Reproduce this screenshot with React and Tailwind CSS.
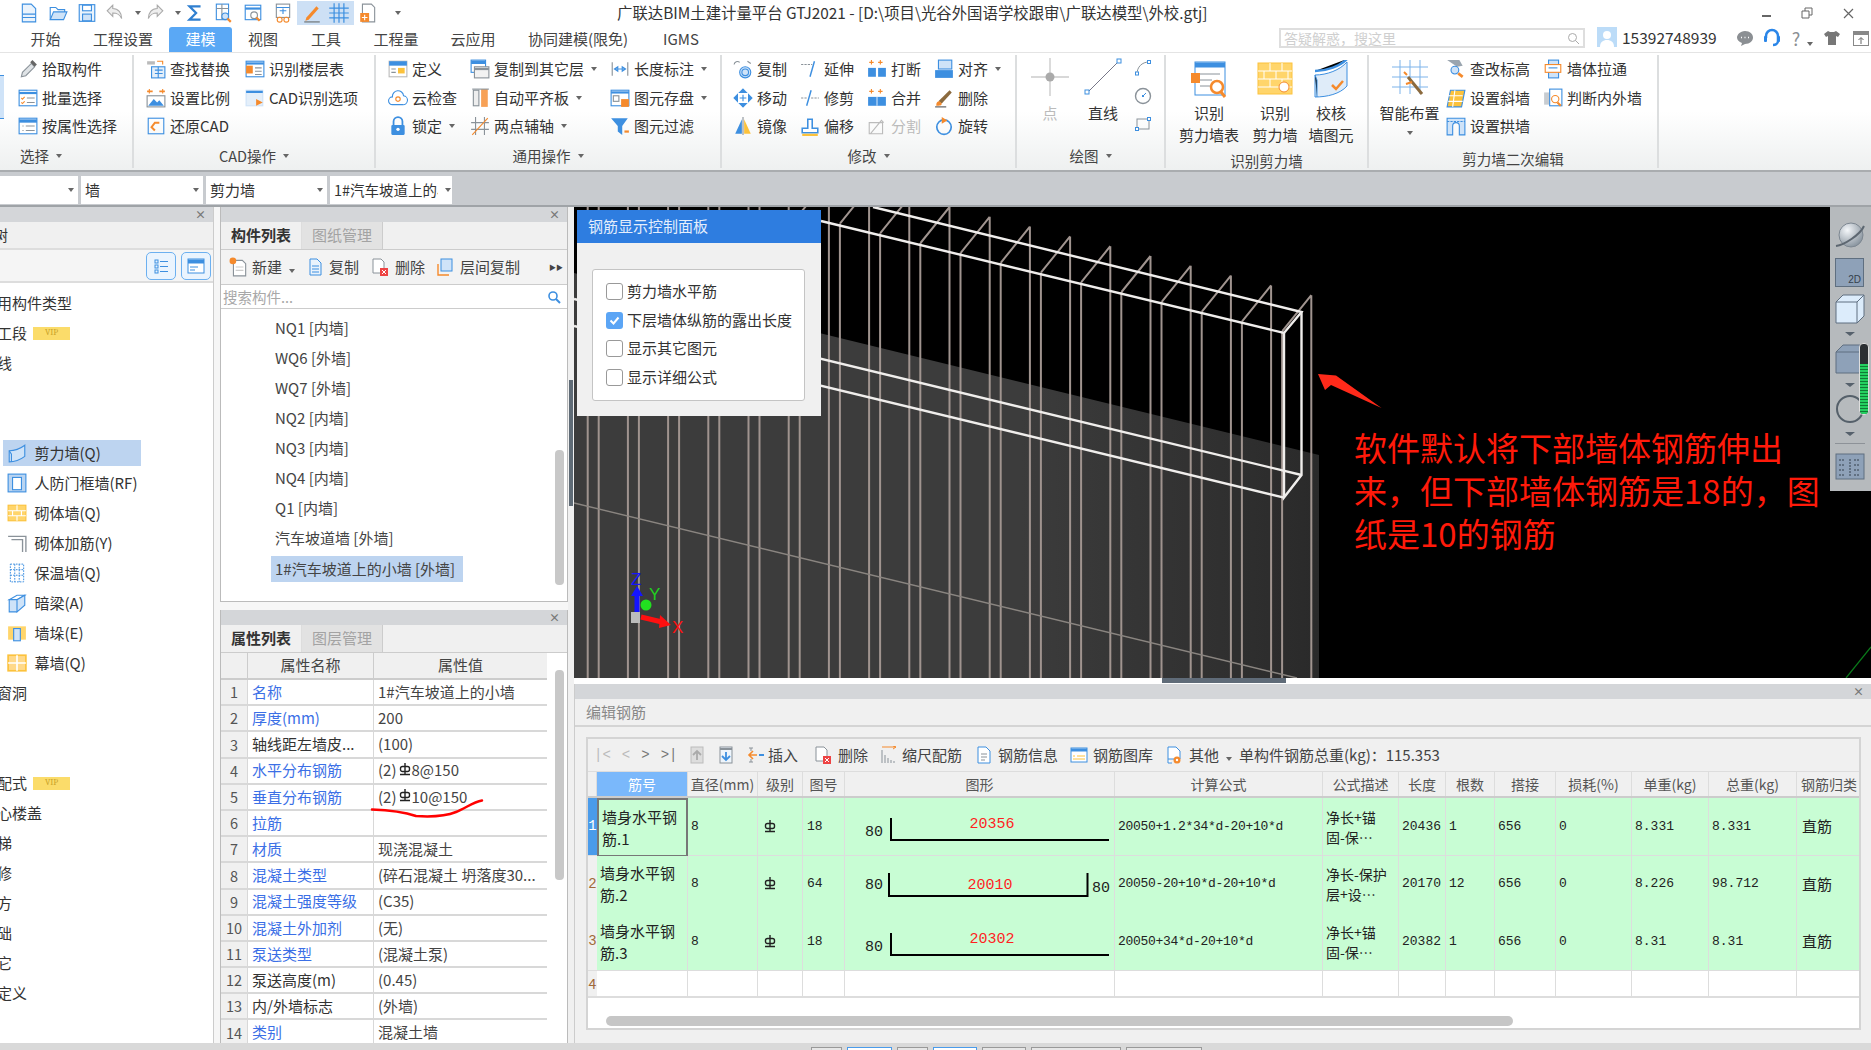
import React from 'react';

const CJK = { fontFamily: '"Noto Sans CJK SC", "Noto Sans", sans-serif' };

const Ic = ({ s = 18, children }) => (
  <svg width={s} height={s} viewBox="0 0 18 18" fill="none" className="shrink-0">{children}</svg>
);

const B = '#3d8fe0';
const L = '#cfe3f8';
const O = '#f58a2c';
const G = '#8a9299';
const Y = '#fcc23c';

const icons = {
  file: <><path d="M3 1h8l4 4v12H3z" fill="#eaf3fc" stroke={B} /><path d="M3 10h12M3 13h12" stroke={B} /></>,
  open: <><path d="M2 15V4h5l2 2h6v3" stroke={B} /><path d="M2 15l3-7h12l-3 7z" fill={L} stroke={B} /></>,
  save: <><rect x="2" y="1.5" width="14" height="15" fill="#eaf3fc" stroke={B} /><rect x="5" y="2" width="8" height="5" fill="#fff" stroke={B} /><rect x="5" y="10" width="8" height="6" fill={L} stroke={B} /></>,
  undo: <path d="M7 2L2 7l5 5V9c4 0 6 1 8 5 0-5-3-9-8-9z" fill="#eee" stroke="#aaa" />,
  redo: <path d="M11 2l5 5-5 5V9c-4 0-6 1-8 5 0-5 3-9 8-9z" fill="#eee" stroke="#aaa" />,
  sum: <path d="M14 3H4l6 6-6 6h10" stroke="#2f7fd0" strokeWidth="2" />,
  table1: <><rect x="3" y="1" width="11" height="14" fill="#fff" stroke={B} /><path d="M3 5h11M8 1v14" stroke={G} /><circle cx="11" cy="12" r="3" fill={L} stroke={B} /><path d="M13 14l3 3" stroke={O} strokeWidth="2" /></>,
  table2: <><rect x="2" y="2" width="14" height="13" fill="#fff" stroke={B} /><path d="M2 5h14" stroke={B} strokeWidth="2" /><circle cx="10" cy="11" r="3" stroke={G} /><path d="M12 13l3 3" stroke={O} strokeWidth="2" /></>,
  table3: <><rect x="3" y="1" width="12" height="12" fill="#fff" stroke={G} /><path d="M3 4h12M6 7h6M9 5v5" stroke={B} /><circle cx="6" cy="15" r="2.2" stroke={O} /><circle cx="12" cy="15" r="2.2" stroke={O} /></>,
  pencil: <><path d="M4 13L13 3l2 2-9 10-3 1z" fill={O} /><path d="M2 17h14" stroke={G} strokeWidth="1.5" /></>,
  grid: <path d="M1 5h16M1 9h16M1 13h16M5 1v16M9 1v16M13 1v16" stroke={B} />,
  docPlus: <><path d="M4 1h8l3 3v13H4z" fill="#fff" stroke={G} /><rect x="2" y="9" width="8" height="8" fill={O} /><path d="M6 10.5v5M3.5 13h5" stroke="#fff" /></>,
  pick: <><path d="M3 16l1-4 8-8 3 3-8 8z" fill="#dfe3e6" stroke={G} /><path d="M11 3l2-2 4 4-2 2z" fill="#666" /></>,
  batch: <><rect x="1" y="2" width="16" height="14" fill="#fff" stroke={B} /><path d="M1 4.5h16" stroke={B} strokeWidth="2" /><path d="M3 9l1 1 2-2M3 13l1 1 2-2" stroke={O} /><path d="M8 9h7M8 13h7" stroke={G} /></>,
  attr: <><rect x="1" y="2" width="16" height="14" fill="#fff" stroke={B} /><path d="M1 4.5h16" stroke={B} strokeWidth="3" /><path d="M4 9h1M4 13h1M7 9h8M7 13h8" stroke={G} /></>,
  find: <><path d="M1 2h7v3H1z" fill="#bbb" /><path d="M10 2h5v3" stroke={O} /><rect x="5" y="7" width="12" height="10" fill="#e4effa" stroke={B} /><path d="M8 10h7M8 13h7M11 7v10" stroke={B} /></>,
  scale: <><path d="M1 3h5M12 3h5" stroke={O} strokeWidth="1.5" /><path d="M3 1v4M15 1v4" stroke={O} /><rect x="1" y="7" width="16" height="10" fill="#fff" stroke={G} /><path d="M2 16l5-6 3 3 2-2 4 5z" fill={B} /></>,
  restore: <><rect x="2" y="2" width="14" height="14" stroke={B} /><path d="M12 6H8L5 10l3 3" stroke={O} strokeWidth="1.8" /></>,
  floor: <><rect x="1" y="2" width="16" height="14" fill="#fff" stroke={B} /><path d="M1 4h16" stroke={B} strokeWidth="2" /><rect x="1" y="6" width="6" height="7" fill={O} /><path d="M9 8h6M9 11h6M9 14h6" stroke={G} /></>,
  cadopt: <><rect x="1" y="2" width="15" height="14" fill="#e4effa" stroke={L} /><path d="M1 3.5h15" stroke={B} strokeWidth="2" /><path d="M10 10l6 3-6 3z" fill={O} /></>,
  define: <><rect x="1" y="2" width="16" height="14" fill="#fff" stroke="#bbb" /><path d="M1 4h16" stroke={B} strokeWidth="4" /><rect x="9" y="8" width="6" height="5" fill={Y} /><path d="M3 9h4M3 12h4" stroke={G} /></>,
  cloud: <><path d="M4 15a3 3 0 010-7 5 5 0 0110-1 4 4 0 01-1 8z" fill="#fff" stroke={B} /><circle cx="9" cy="10" r="2" stroke={O} /></>,
  lock: <><path d="M5 8V5a4 4 0 018 0v3" stroke={B} strokeWidth="1.6" /><rect x="3" y="8" width="12" height="9" rx="1" fill={B} /><circle cx="9" cy="12" r="1.5" fill="#fff" /></>,
  copyTo: <><rect x="1" y="1" width="13" height="11" fill="#fff" stroke={B} /><path d="M1 3h13" stroke={B} strokeWidth="3" /><rect x="4" y="7" width="13" height="10" fill="#f2f2f2" stroke={G} /><path d="M4 9h13" stroke={G} strokeWidth="2" /></>,
  align: <><rect x="3" y="2" width="5" height="14" fill="#eee" stroke={G} /><rect x="10" y="1" width="6" height="16" fill={O} opacity=".8" /><path d="M2 1h15" stroke={G} /></>,
  axis: <><path d="M5 1v16M13 1v16M1 6h16M1 12h16" stroke={G} /><path d="M2 17L16 2" stroke={O} /></>,
  dim: <><path d="M2 3v12M16 3v12" stroke={G} /><path d="M4 9h10M4 9l3-2v4zM14 9l-3-2v4z" stroke={B} /></>,
  store: <><rect x="1" y="2" width="16" height="14" fill="#fff" stroke={B} /><path d="M1 4h16" stroke={B} strokeWidth="2" /><rect x="10" y="10" width="7" height="7" fill={O} /><rect x="3" y="7" width="5" height="5" stroke={G} /></>,
  filter: <><path d="M1 2h15l-5 7v8l-4-3V9z" fill={B} /><path d="M13 14h4" stroke={O} strokeWidth="2" /></>,
  copy: <><path d="M1 5a3 3 0 015-2M13 2l3 2" stroke={G} /><circle cx="11" cy="12" r="5" fill={L} stroke={B} /><circle cx="11" cy="12" r="3" stroke={B} /></>,
  move: <path d="M9 1l3 3H6zM9 17l-3-3h6zM1 9l3-3v6zM17 9l-3 3V6zM6 9h6M9 6v6" fill={B} stroke={B} />,
  mirror: <><path d="M8 3v13H2z" fill={B} /><path d="M10 3v13h6z" fill={Y} /><path d="M9 1v16" stroke={G} /></>,
  extend: <><path d="M1 5h10" stroke={G} strokeDasharray="2 1" /><path d="M13 2l-4 14" stroke={B} strokeWidth="1.3" /></>,
  trim: <><path d="M10 2L6 16" stroke={B} strokeWidth="1.3" /><path d="M1 9h6M10 9h7" stroke={G} strokeDasharray="2 1" /></>,
  offset: <><path d="M2 15v-4h5V3h4v8h5v4z" fill="#fff" stroke={B} strokeWidth="1.4" /><path d="M2 17h14" stroke={Y} strokeWidth="2" /></>,
  brk: <><path d="M4 1v4M2 3h4M12 1v4M10 3h4" stroke={O} /><rect x="1" y="8" width="7" height="8" fill={B} /><rect x="10" y="8" width="7" height="8" fill={B} /></>,
  merge: <><path d="M4 1v4M2 3h4M12 1v4M10 3h4" stroke={O} /><rect x="1" y="8" width="16" height="8" fill={B} /><path d="M9 8v8" stroke="#cfe3f8" /></>,
  split: <><path d="M2 6h12v10H2zM3 16l10-12 2 2" stroke="#bbb" /></>,
  align2: <><rect x="4" y="1" width="12" height="8" fill={L} stroke={B} /><rect x="1" y="10" width="16" height="7" fill={B} /></>,
  erase: <><path d="M4 12L14 2l2 2L7 14z" fill="#8b6a3e" /><path d="M2 16c0-3 1-4 3-4l2 2c0 2-2 2-5 2z" fill={O} /><path d="M1 17h10" stroke="#555" /></>,
  rotate: <><circle cx="9" cy="10" r="6.5" stroke={B} strokeWidth="1.5" /><path d="M7 1l5 3-5 3z" fill={O} /></>,
  arc: <><path d="M3 15C3 8 8 3 15 3" stroke={G} /><rect x="1.5" y="13" width="3" height="3" fill="#fff" stroke={B} /><rect x="13.5" y="1.5" width="3" height="3" fill="#fff" stroke={B} /></>,
  circ: <><circle cx="9" cy="9" r="7.5" stroke={G} strokeWidth="1.4" /><path d="M9 9l3-3" stroke={B} /><rect x="8" y="8" width="2" height="2" fill={B} /></>,
  rect: <><rect x="3" y="4" width="12" height="10" stroke={G} /><rect x="1.5" y="12.5" width="3" height="3" fill="#fff" stroke={B} /><rect x="13.5" y="2.5" width="3" height="3" fill="#fff" stroke={B} /></>,
  checkH: <><path d="M1 1h11l3 5-5 1z" fill="#9aa5af" /><circle cx="8" cy="10" r="3.5" fill={L} stroke={B} /><path d="M11 13l4 3" stroke={O} strokeWidth="2.5" /></>,
  slant: <><path d="M4 2h13l-3 15H1z" fill={Y} stroke={B} /><path d="M2 7h13M2 12h13M8 2l-2 15" stroke="#fff" /></>,
  arch: <><path d="M1 2h16v15h-5V9a3 3 0 00-6 0v8H1z" fill={L} stroke={B} /><path d="M1 5h16" stroke={B} strokeDasharray="2 1" /></>,
  pull: <><rect x="5" y="1" width="9" height="16" fill={L} stroke={B} /><rect x="2" y="5" width="14" height="7" fill="#fff" stroke={O} /><path d="M5 8h8" stroke={B} /></>,
  inout: <><rect x="1" y="4" width="6" height="11" fill="#c7ccd1" /><rect x="6" y="1" width="11" height="15" fill="#fff" stroke={B} /><circle cx="11" cy="10" r="3.3" stroke={O} /><path d="M13 13l3 3" stroke={O} strokeWidth="2" /></>,
  listA: <><rect x="3" y="3" width="3" height="3" stroke={B} /><rect x="3" y="8" width="3" height="3" stroke={B} /><rect x="3" y="13" width="3" height="3" stroke={B} /><path d="M8 4.5h8M8 9.5h8M8 14.5h8" stroke={B} /></>,
  listB: <><rect x="1" y="2" width="16" height="14" fill="#fff" stroke={B} /><path d="M1 4.5h16" stroke={B} strokeWidth="4" /><path d="M3 10h8M3 13h5" stroke={B} /></>,
  newDoc: <><path d="M4 3h8l3 3v11H4z" fill="#fff" stroke={G} /><path d="M6 9h7M6 12h7" stroke="#ccc" /><circle cx="3.5" cy="3.5" r="3" fill={O} /></>,
  docCopy: <><path d="M4 1h7l4 4v12H4z" fill="#eaf3fc" stroke={B} /><path d="M6 8h7M6 11h7M6 14h7" stroke={B} /></>,
  docDel: <><path d="M2 1h8l3 3v11H2z" fill="#fff" stroke={G} /><rect x="9" y="10" width="8" height="8" fill="#e44" /><path d="M11 12l4 4M15 12l-4 4" stroke="#fff" /></>,
  layerCopy: <><path d="M3 6v11h11" stroke={O} strokeWidth="1.4" /><rect x="6" y="1" width="11" height="12" fill={L} stroke={B} /></>,
  wall: <><path d="M2 7c5 0 10-2 14-5v10c-4 3-9 5-14 5z" fill={L} stroke={B} /><path d="M2 7l2 3v7" stroke={B} /></>,
  door: <><rect x="1" y="1" width="16" height="16" fill="#b9d4f1" stroke={B} /><rect x="5" y="4" width="8" height="11" fill="#fff" stroke={B} /></>,
  brick: <><rect x="1" y="2" width="16" height="14" fill="#ffd56b" stroke={Y} /><path d="M1 7h16M1 11.5h16M9 2v5M5 7v4.5M13 7v4.5M9 11.5V16" stroke="#fff" /></>,
  rebar: <path d="M1 3h16v14M4 6h10v11M1 9" stroke={G} strokeWidth="1.2" />,
  ins: <path d="M3 1h12v16H3zM7 1v16M11 1v16M3 6h12M3 11h12" stroke={B} strokeWidth=".9" strokeDasharray="1.5 1" />,
  beam: <><path d="M2 6l7-4h7L9 6z" fill="#fff" stroke={B} /><path d="M2 6h7v11H2zM9 6l7-4v9l-7 6z" fill={L} stroke={B} /></>,
  pier: <><rect x="1" y="3" width="16" height="12" fill="#ffd56b" /><rect x="6" y="5" width="6" height="11" fill={L} stroke={B} /></>,
  curtain: <><rect x="1" y="2" width="16" height="14" fill="#ffd98a" stroke={Y} strokeWidth="1.5" /><path d="M1 9h16M9 2v14" stroke="#fff" strokeWidth="1.5" /></>,
  up: <><rect x="3" y="1" width="12" height="16" fill="#ddd" stroke="#bbb" /><path d="M9 14V6M5 9l4-4 4 4" stroke="#aaa" strokeWidth="1.8" /></>,
  down: <><rect x="3" y="1" width="12" height="16" fill="#eef5fc" stroke={G} /><path d="M3 3h12" stroke={G} strokeWidth="2" /><path d="M9 6v8M5 10l4 4 4-4" stroke={B} strokeWidth="1.8" /></>,
  insert: <><path d="M2 2h4M2 16h4M4 2v3M4 13v3" stroke={G} /><path d="M10 9H2M6 5L2 9l4 4" stroke={O} strokeWidth="1.6" /><path d="M12 8h5v2h-5z" fill={B} /></>,
  ruler: <><path d="M2 1h14M13 0l3 1-3 2" stroke={O} /><path d="M2 4v13M5 9v8M8 12v5M11 14v3M14 15v2" stroke={G} /></>,
  info: <><path d="M3 1h8l4 4v12H3z" fill="#fff" stroke={B} /><path d="M6 8h6M6 11h6M6 14h4" stroke={G} /></>,
  lib: <><rect x="1" y="2" width="16" height="14" fill="#fff" stroke={B} /><path d="M1 4h16" stroke={B} strokeWidth="3" /><path d="M3 10h2M7 10h8M3 13h12" stroke={Y} /></>,
  other: <><path d="M3 1h8l4 4v8H3zM3 13v4h4" fill="#fff" stroke={B} /><circle cx="12" cy="14" r="3.5" fill={O} /><circle cx="12" cy="14" r="1.2" fill="#fff" /></>,
};

const Caret = () => <span className="inline-block ml-[7px] w-0 h-0 border-x-[3.5px] border-x-transparent border-t-[4px] border-t-[#666]" />;

const Tool = ({ icon, label, caret, w = 24, muted }) => (
  <div className={`flex items-center h-[28.5px] whitespace-nowrap text-[15px] ${muted ? 'text-[#bbb]' : 'text-[#333]'}`}>
    <span className="shrink-0" style={{ width: w }}><Ic s={20}>{icons[icon]}</Ic></span>
    {label}
    {caret && <Caret />}
  </div>
);

const Group = ({ w, label, labelClass = '', children }) => (
  <div className="flex flex-col justify-between border-r-2 border-[#dcdedf] my-[2px]" style={{ width: w }}>
    <div className="flex">{children}</div>
    <div className={`h-[24px] flex items-center justify-center text-[14.5px] text-[#444] ${labelClass}`}>{label}</div>
  </div>
);

const Big = ({ w, lines, children }) => (
  <div className="flex flex-col items-center text-[15px] leading-[22px] text-[#333]" style={{ width: w }}>
    <div className="h-[47px] flex items-center justify-center">{children}</div>
    {lines.map((l) => <div key={l} className="whitespace-nowrap">{l}</div>)}
  </div>
);

const Panel = () => (
  <div className="h-[15px] bg-[#d4d6d9] flex items-center justify-end pr-[7px] text-[11px] font-bold text-[#777] leading-none shrink-0">×</div>
);

const Tabs = ({ a, b }) => (
  <div className="h-[28px] bg-[#f0f0f0] border-b border-[#ccc] flex shrink-0 text-[15px]">
    <div className="w-[81px] flex items-center justify-center font-bold text-[#333] border-r border-[#ddd]">{a}</div>
    <div className="w-[81px] flex items-center justify-center text-[#a3a3a3] bg-[#e2e2e2] border-r border-[#ccc]">{b}</div>
  </div>
);

const Rebar = ({ s = 12 }) => (
  <svg width={s} height={s + 2} viewBox="0 0 12 14" className="inline-block shrink-0">
    <rect x="1.5" y="3.5" width="9" height="5" rx="2" fill="none" stroke="#222" strokeWidth="1.4" />
    <path d="M6 0v11M1 11.5h10" stroke="#222" strokeWidth="1.4" />
  </svg>
);

const leftTop = [
  ['常用构件类型', 303], ['施工段', 333, true], ['轴线', 363],
];

const wallItems = [
  ['wall', '剪力墙(Q)', true], ['door', '人防门框墙(RF)'], ['brick', '砌体墙(Q)'], ['rebar', '砌体加筋(Y)'],
  ['ins', '保温墙(Q)'], ['beam', '暗梁(A)'], ['pier', '墙垛(E)'], ['curtain', '幕墙(Q)'],
];

const lowerNav = [['装配式', true], ['空心楼盖'], ['楼梯'], ['装修'], ['土方'], ['基础'], ['其它'], ['自定义']];

const compList = ['NQ1 [内墙]', 'WQ6 [外墙]', 'WQ7 [外墙]', 'NQ2 [内墙]', 'NQ3 [内墙]', 'NQ4 [内墙]', 'Q1 [内墙]', '汽车坡道墙 [外墙]'];

const props = [
  ['名称', '1#汽车坡道上的小墙', 1], ['厚度(mm)', '200', 1], ['轴线距左墙皮...', '(100)', 0],
  ['水平分布钢筋', 'R8', 1], ['垂直分布钢筋', 'R10', 1], ['拉筋', '', 1], ['材质', '现浇混凝土', 1],
  ['混凝土类型', '(碎石混凝土 坍落度30...', 1], ['混凝土强度等级', '(C35)', 1], ['混凝土外加剂', '(无)', 1],
  ['泵送类型', '(混凝土泵)', 1], ['泵送高度(m)', '(0.45)', 0], ['内/外墙标志', '(外墙)', 0], ['类别', '混凝土墙', 1],
];

const cols = 'grid grid-cols-[9px_91px_70px_45px_42px_270px_208px_76px_47px_49px_61px_76px_77px_88px_65px]';
const heads = ['筋号', '直径(mm)', '级别', '图号', '图形', '计算公式', '公式描述', '长度', '根数', '搭接', '损耗(%)', '单重(kg)', '总重(kg)', '钢筋归类'];

const bars = [
  { name: ['墙身水平钢', '筋.1'], tu: '18', f: '20050+1.2*34*d-20+10*d', d: ['净长+锚', '固-保…'], len: '20436', n: '1', w: '8.331', t: '8.331', shape: 0, v: '20356' },
  { name: ['墙身水平钢', '筋.2'], tu: '64', f: '20050-20+10*d-20+10*d', d: ['净长-保护', '层+设…'], len: '20170', n: '12', w: '8.226', t: '98.712', shape: 1, v: '20010' },
  { name: ['墙身水平钢', '筋.3'], tu: '18', f: '20050+34*d-20+10*d', d: ['净长+锚', '固-保…'], len: '20382', n: '1', w: '8.31', t: '8.31', shape: 0, v: '20302' },
];

const Shape = ({ b }) => (
  <svg width="270" height="57" viewBox="0 0 270 57">
    <text x="20" y={b.shape ? 33 : 38} fontSize="15" fill="#222" fontFamily="Liberation Mono, monospace">80</text>
    {b.shape ? (
      <>
        <path d="M44 17v23h198.5V17" stroke="#000" strokeWidth="2" fill="none" />
        <text x="247" y="36" fontSize="15" fill="#222" fontFamily="Liberation Mono, monospace">80</text>
        <text x="145" y="33" fontSize="15" fill="#ff1f1f" textAnchor="middle" fontFamily="Liberation Mono, monospace">{b.v}</text>
      </>
    ) : (
      <>
        <path d="M46 20v22h218" stroke="#000" strokeWidth="2" fill="none" />
        <text x="147" y="30" fontSize="15" fill="#ff1f1f" textAnchor="middle" fontFamily="Liberation Mono, monospace">{b.v}</text>
      </>
    )}
  </svg>
);

const mono = { fontFamily: '"Liberation Mono", monospace' };

const Scene = () => {
  const verticals = [];
  for (let n = -9; n <= 9; n++) {
    const rx = 949.5 + 40.2 * n;
    const ry = 207 + 9.8 * n;
    const fx = rx + 11;
    const fy = ry + 9.8 + 36;
    verticals.push(<path key={n} d={`M${rx} ${ry}V678M${rx} ${ry}L${rx - 29} ${ry + 36}`} />);
    if (n < 9) verticals.push(<path key={`f${n}`} d={`M${fx} ${fy}V678`} />);
  }
  return (
    <svg className="absolute inset-0" width="1297" height="471" viewBox="574 207 1297 471">
      <defs>
        <linearGradient id="plane" x1="0" x2="1" y1="0" y2="0">
          <stop offset="0.6" stopColor="#3c3c3c" />
          <stop offset="1" stopColor="#2a2a2a" />
        </linearGradient>
      </defs>
      <path d="M574 273L1319 455V678H574z" fill="url(#plane)" />
      <g stroke="#a0948f" strokeWidth="2" fill="none">{verticals}</g>
      <path d="M574 503L1297 678" stroke="#8a8580" strokeWidth="1.4" />
      <g stroke="#f0eeec" strokeWidth="2.4" fill="none">
        <path d="M873 207L1301.5 312L1284 333L821 221" />
        <path d="M1284 333V497.6L1301.5 475V312" />
        <path d="M574 299L1301.5 475" />
        <path d="M574 326L1284 497.6" />
      </g>
      <path d="M1318 374L1336 375.5L1381.5 408L1331 385L1325 390z" fill="#ff2a1a" />
      <path d="M1871 647L1846 678" stroke="#0a7a1a" strokeWidth="1.2" />
      <rect x="631" y="612" width="9" height="11" fill="#bbb" />
      <path d="M637 612V594" stroke="#1414ff" strokeWidth="5" />
      <path d="M631 596L637 586L643 596z" fill="#1414ff" />
      <circle cx="646" cy="605" r="5.5" fill="#22e020" />
      <path d="M641 617L662 622" stroke="#ff1010" strokeWidth="5" />
      <path d="M660 615L671 625L659 628z" fill="#ff1010" />
      <text x="631" y="585" fontSize="17" fill="#1414ff" fontFamily="Liberation Sans, sans-serif">Z</text>
      <text x="649" y="600" fontSize="17" fill="#22d020" fontFamily="Liberation Sans, sans-serif">Y</text>
      <text x="672" y="633" fontSize="17" fill="#ff1010" fontFamily="Liberation Sans, sans-serif">X</text>
    </svg>
  );
};

const ViewTools = () => (
  <div className="absolute right-0 top-0 w-[41px] h-[284px] bg-[#b6babd] flex flex-col items-center pt-[14px] pr-[2px]">
    <svg width="32" height="30" viewBox="0 0 32 30">
      <defs>
        <radialGradient id="globe" cx="0.35" cy="0.3" r="0.8">
          <stop offset="0" stopColor="#f4f7fa" />
          <stop offset="1" stopColor="#7f8b96" />
        </radialGradient>
      </defs>
      <circle cx="17" cy="14" r="12" fill="url(#globe)" stroke="#7d8791" />
      <path d="M2 25C10 24 26 14 30 5" stroke="#5d6771" strokeWidth="2" fill="none" />
    </svg>
    <div className="mt-[7px] w-[29px] h-[29px] bg-[#8ea1b8] border border-[#5f6f80] flex items-end justify-end pr-[2px] text-[10px] leading-[12px] text-[#34404c]" style={{ fontFamily: 'Liberation Sans, sans-serif' }}>2D</div>
    <svg className="mt-[7px]" width="30" height="30" viewBox="0 0 30 30">
      <path d="M1 8L8 1H29V22L22 29H1z" fill="#dcecfb" stroke="#5f6f80" />
      <path d="M1 8H22V29M22 8L29 1" stroke="#5f6f80" fill="none" />
    </svg>
    <span className="mt-[8px] w-0 h-0 border-x-[5px] border-x-transparent border-t-[4px] border-t-[#56616c]" />
    <div className="relative w-[30px] h-[30px] mt-[8px]">
      <svg width="30" height="30" viewBox="0 0 30 30">
        <path d="M1 8L8 1H29V29H1z" fill="#8ea1b8" stroke="#5f6f80" />
        <path d="M1 8H29" stroke="#5f6f80" />
      </svg>
    </div>
    <span className="mt-[9px] w-0 h-0 border-x-[5px] border-x-transparent border-t-[4px] border-t-[#56616c]" />
    <div className="mt-[8px] w-[28px] h-[28px] rounded-full border-2 border-[#55606a]" />
    <span className="mt-[9px] w-0 h-0 border-x-[5px] border-x-transparent border-t-[4px] border-t-[#56616c]" />
    <div className="mt-[7px] w-[30px] h-px bg-[#8d9298]" />
    <svg className="mt-[6px]" width="30" height="30" viewBox="0 0 30 30">
      <rect x="1" y="4" width="28" height="25" fill="#8ea1b8" stroke="#5f6f80" />
      <path d="M4 10h6M4 15h6M4 20h6M4 25h6M19 10h6M19 15h6M19 20h6M19 25h6M15 9v18" stroke="#34404c" strokeDasharray="2 1" />
    </svg>
    <div className="absolute right-[2px] top-[136px] w-[10px] h-[72px] rounded-[4px] bg-[#2b2f33] border border-[#ddd] flex flex-col justify-end">
      <div className="h-[50px] rounded-b-[3px] bg-[repeating-linear-gradient(0deg,#24d060_0px,#24d060_2px,#0f7a35_2px,#0f7a35_3px)]" />
    </div>
  </div>
);

const ControlDialog = () => (
  <div className="absolute left-[3px] top-[3px] w-[244px] h-[206px] bg-[#f0f0f0] text-[15px] text-[#333]">
    <div className="h-[33px] bg-[#2e7de0] flex items-center pl-[11px] text-[#e4eefc]">钢筋显示控制面板</div>
    <div className="ml-[15px] mt-[26px] w-[213px] h-[132px] bg-white border border-[#c4c4c4] rounded-[3px] pt-[7px] pl-[13px]">
      {['剪力墙水平筋', '下层墙体纵筋的露出长度', '显示其它图元', '显示详细公式'].map((t, i) => (
        <div key={t} className="h-[28.7px] flex items-center whitespace-nowrap">
          {i === 1 ? (
            <span className="w-[17px] h-[17px] rounded-[3px] bg-[#5ba5f5] flex items-center justify-center mr-[4px]">
              <svg width="11" height="11" viewBox="0 0 11 11"><path d="M1.5 5.5l3 3 5-6" stroke="#fff" strokeWidth="2" fill="none" /></svg>
            </span>
          ) : (
            <span className="w-[17px] h-[17px] rounded-[3px] bg-white border border-[#999] mr-[4px]" />
          )}
          {t}
        </div>
      ))}
    </div>
  </div>
);

const App = () => {
  return (
    <div className="w-[1871px] h-[1050px] overflow-hidden bg-[#eceded] flex flex-col text-[#333]" style={CJK}>
      {/* title bar */}
      <div className="h-[26px] bg-white flex items-center shrink-0 relative">
        <div className="flex items-center pl-[19px] w-[617px] shrink-0">
          <span className="w-[29px]"><Ic s={20}>{icons.file}</Ic></span>
          <span className="w-[29px]"><Ic s={20}>{icons.open}</Ic></span>
          <span className="w-[28px]"><Ic s={20}>{icons.save}</Ic></span>
          <span className="w-[23px]"><Ic s={20}>{icons.undo}</Ic></span>
          <span className="w-[17px] flex"><Caret /></span>
          <span className="w-[23px]"><Ic s={20}>{icons.redo}</Ic></span>
          <span className="w-[17px] flex"><Caret /></span>
          <span className="w-[28px]"><Ic s={20}>{icons.sum}</Ic></span>
          <span className="w-[30px]"><Ic s={20}>{icons.table1}</Ic></span>
          <span className="w-[30px]"><Ic s={20}>{icons.table2}</Ic></span>
          <span className="w-[24px]"><Ic s={20}>{icons.table3}</Ic></span>
          <span className="w-[57px] h-[24px] flex items-center justify-center gap-[6px] bg-[#cde0f5]"><Ic s={20}>{icons.pencil}</Ic><Ic s={22}>{icons.grid}</Ic></span>
          <span className="w-[30px] ml-[4px]"><Ic s={20}>{icons.docPlus}</Ic></span>
          <Caret />
        </div>
        <div className="text-[15.4px] text-[#333] whitespace-nowrap">广联达BIM土建计量平台 GTJ2021 - [D:\项目\光谷外国语学校跟审\广联达模型\外校.gtj]</div>
        <div className="ml-auto flex items-center gap-[30px] pr-[17px] text-[#666]">
          <span className="w-[9px] h-[2px] bg-[#666] mt-[5px]" />
          <svg width="12" height="12" viewBox="0 0 12 12"><path d="M1 4h7v7H1zM4 4V1h7v7H8" stroke="#666" fill="none" /></svg>
          <svg width="11" height="11" viewBox="0 0 11 11"><path d="M1 1l9 9M10 1l-9 9" stroke="#666" strokeWidth="1.2" /></svg>
        </div>
      </div>

      {/* tabs + account */}
      <div className="h-[26px] bg-white flex shrink-0 text-[15px] text-[#444]">
        <div className="w-[14px]" />
        {[['开始', 63], ['工程设置', 92]].map(([t, w]) => <div key={t} className="flex items-center justify-center" style={{ width: w }}>{t}</div>)}
        <div className="w-[63px] mt-[1px] bg-[#5aa8f5] text-white rounded-t-[3px] flex items-center justify-center">建模</div>
        {[['视图', 62], ['工具', 64], ['工程量', 76], ['云应用', 78], ['协同建模(限免)', 132], ['IGMS', 74]].map(([t, w]) => <div key={t} className="flex items-center justify-center" style={{ width: w }}>{t}</div>)}
        <div className="ml-[561px] mt-[2px] w-[306px] h-[20px] border-2 border-[#dedede] flex items-center justify-between px-[3px] text-[14px] text-[#cfcfcf]">
          答疑解惑，搜这里
          <svg width="13" height="13" viewBox="0 0 13 13"><circle cx="5.5" cy="5.5" r="4" stroke="#aaa" fill="none" /><path d="M8.5 8.5l3.5 3.5" stroke="#aaa" /></svg>
        </div>
        <div className="ml-[12px] mt-[1px] w-[20px] h-[20px] bg-[#bcdcf8] flex items-end justify-center">
          <svg width="16" height="18" viewBox="0 0 16 18"><circle cx="8" cy="6" r="4" fill="#fff" /><path d="M1 18c0-5 3-7 7-7s7 2 7 7z" fill="#fff" /></svg>
        </div>
        <div className="ml-[5px] text-[15.5px] text-[#333] h-[24px] flex items-center">15392748939</div>
        <div className="flex items-center gap-[9px] ml-[19px] pb-[3px]">
          <svg width="18" height="18" viewBox="0 0 18 18"><path d="M9 2c5 0 8 3 8 6.5S14 15 9 15l-4 2 1-3C3 13 1 11 1 8.500S4 2 9 2z" fill="#8b8f93" /><path d="M5 8.500h1M8.500 8.500h1M12 8.500h1" stroke="#fff" strokeWidth="1.6" /></svg>
          <svg width="18" height="20" viewBox="0 0 18 20"><path d="M3 10V8a6 6 0 0112 0v5c0 3-3 4-5 4" stroke="#2b86e8" strokeWidth="2.5" fill="none" /><rect x="1" y="8" width="3" height="6" rx="1" fill="#2b86e8" /><rect x="14" y="8" width="3" height="6" rx="1" fill="#2b86e8" /></svg>
          <span className="text-[18px] leading-none text-[#8b8f93] ml-[2px] w-[22px]">?<Caret /></span>
          <svg width="18" height="18" viewBox="0 0 18 18"><path d="M5 2L1 5l2 3 2-1v9h8V7l2 1 2-3-4-3-2 1H7z" fill="#777" /></svg>
          <svg className="ml-[2px]" width="18" height="18" viewBox="0 0 18 18"><rect x="1.500" y="2.500" width="15" height="14" fill="#fff" stroke="#888" /><path d="M2 4.500h14" stroke="#888" strokeWidth="3" /><path d="M9 15V9M6.500 11L9 8.500l2.500 2.500" stroke="#666" fill="none" /></svg>
        </div>
      </div>

      {/* ribbon */}
      <div className="h-[120px] shrink-0 flex border-t border-[#e4e4e4] border-b-2 border-b-[#a9acaf] bg-gradient-to-b from-white via-white to-[#eef0f0]">
        <Group w={134} label={<>选择<Caret /></>} labelClass="pr-[50px]">
          <div className="w-[4px] h-[44px] mt-[20px] bg-[#cfe3f8] border-y border-[#3d8fe0]" />
          <div className="pl-[14px]">
            <Tool icon="pick" label="拾取构件" /><Tool icon="batch" label="批量选择" /><Tool icon="attr" label="按属性选择" />
          </div>
        </Group>
        <Group w={242} label={<>CAD操作<Caret /></>}>
          <div className="pl-[12px] w-[111px]">
            <Tool icon="find" label="查找替换" /><Tool icon="scale" label="设置比例" /><Tool icon="restore" label="还原CAD" />
          </div>
          <div>
            <Tool icon="floor" label="识别楼层表" /><Tool icon="cadopt" label="CAD识别选项" />
          </div>
        </Group>
        <Group w={346} label={<>通用操作<Caret /></>}>
          <div className="pl-[12px] w-[94px]">
            <Tool icon="define" label="定义" /><Tool icon="cloud" label="云检查" /><Tool icon="lock" label="锁定" caret />
          </div>
          <div className="w-[140px]">
            <Tool icon="copyTo" label="复制到其它层" caret /><Tool icon="align" label="自动平齐板" caret /><Tool icon="axis" label="两点辅轴" caret />
          </div>
          <div>
            <Tool icon="dim" label="长度标注" caret /><Tool icon="store" label="图元存盘" caret /><Tool icon="filter" label="图元过滤" />
          </div>
        </Group>
        <Group w={295} label={<>修改<Caret /></>}>
          <div className="pl-[11px] w-[78px]">
            <Tool icon="copy" label="复制" /><Tool icon="move" label="移动" /><Tool icon="mirror" label="镜像" />
          </div>
          <div className="w-[67px]">
            <Tool icon="extend" label="延伸" /><Tool icon="trim" label="修剪" /><Tool icon="offset" label="偏移" />
          </div>
          <div className="w-[67px]">
            <Tool icon="brk" label="打断" /><Tool icon="merge" label="合并" /><Tool icon="split" label="分割" muted />
          </div>
          <div>
            <Tool icon="align2" label="对齐" caret /><Tool icon="erase" label="删除" /><Tool icon="rotate" label="旋转" />
          </div>
        </Group>
        <Group w={149} label={<>绘图<Caret /></>}>
          <div className="w-[8px]" />
          <div className="w-[50px] flex flex-col items-center text-[15px] text-[#bbb]">
            <svg className="mt-[3px]" width="38" height="38" viewBox="0 0 38 38"><path d="M19 0v38M0 19h38" stroke="#ccc" strokeWidth="1.4" /><circle cx="19" cy="19" r="4.500" fill="#aaa" /></svg>
            <div className="mt-[6px]">点</div>
          </div>
          <div className="w-[56px] flex flex-col items-center text-[15px] text-[#333]">
            <svg className="mt-[3px]" width="38" height="38" viewBox="0 0 38 38"><path d="M3 35L35 3" stroke="#778" /><rect x="1" y="32" width="4" height="4" fill="#fff" stroke={B} /><rect x="33" y="1" width="4" height="4" fill="#fff" stroke={B} /></svg>
            <div className="mt-[6px]">直线</div>
          </div>
          <div className="flex flex-col gap-[10px] pt-[4px] pl-[3px]"><Ic>{icons.arc}</Ic><Ic>{icons.circ}</Ic><Ic>{icons.rect}</Ic></div>
        </Group>
        <Group w={203} label="识别剪力墙" labelClass="pt-[5px]">
          <div className="w-[12px]" />
          <Big w={62} lines={['识别', '剪力墙表']}>
            <svg width="38" height="38" viewBox="0 0 38 38"><rect x="5" y="2" width="30" height="33" fill="#fff" stroke={B} /><path d="M5 5h30" stroke={B} strokeWidth="5" /><path d="M10 14h20M10 20h12M10 26h10" stroke={G} /><rect x="1" y="13" width="9" height="10" fill={O} /><circle cx="27" cy="27" r="6" fill="#fff" stroke={O} strokeWidth="2.5" /><path d="M31 32l4 5" stroke={O} strokeWidth="3" /></svg>
          </Big>
          <Big w={70} lines={['识别', '剪力墙']}>
            <svg width="38" height="38" viewBox="0 0 38 38"><rect x="2" y="3" width="34" height="31" fill="#ffd56b" stroke={Y} /><path d="M2 11h34M2 19h34M2 27h34M14 3v8M26 3v8M8 11v8M20 11v8M32 11v8M14 19v8M26 19v8" stroke="#fff" /><circle cx="28" cy="27" r="5" fill="#fff" stroke={O} /></svg>
          </Big>
          <Big w={42} lines={['校核', '墙图元']}>
            <svg width="38" height="38" viewBox="0 0 38 38"><path d="M3 15C15 15 28 10 35 2v24C28 34 15 37 3 37z" fill="#dfecf9" stroke={B} /><path d="M3 15l2 5v17" stroke={B} /><path d="M3 11C15 11 28 6 35 -1" stroke={B} strokeWidth="2.5" /><path d="M20 25l4 4 7-8" stroke={O} strokeWidth="2.5" fill="none" /></svg>
          </Big>
        </Group>
        <Group w={290} label="剪力墙二次编辑" labelClass="pt-[5px]">
          <div className="w-[4px]" />
          <div className="w-[73px] flex flex-col items-center text-[15px] leading-[22px] text-[#333]">
            <svg className="mt-[3px]" width="40" height="42" viewBox="0 0 40 42"><path d="M10 2v34M20 2v34M30 2v34M2 9h36M2 19h36M2 29h36" stroke="#7db3ea" /><path d="M18 19l14 17" stroke="#8b6a3e" strokeWidth="3" /><path d="M14 14l3 3M22 24l-6 2" stroke={O} strokeWidth="2" /></svg>
            <div className="whitespace-nowrap mt-[2px]">智能布置</div>
            <span className="mt-[7px] w-0 h-0 border-x-[3.500px] border-x-transparent border-t-[4px] border-t-[#666]" />
          </div>
          <div className="w-[97px]">
            <Tool icon="checkH" label="查改标高" /><Tool icon="slant" label="设置斜墙" /><Tool icon="arch" label="设置拱墙" />
          </div>
          <div>
            <Tool icon="pull" label="墙体拉通" /><Tool icon="inout" label="判断内外墙" />
          </div>
        </Group>
      </div>

      {/* combo band */}
      <div className="h-[35px] bg-[#c8cbcf] flex items-center gap-[3px] pt-[3px] shrink-0 border-b-2 border-[#9fa3a7] text-[15px] text-[#333]">
        {[['', 78], ['墙', 122], ['剪力墙', 121]].map(([t, w]) => (
          <div key={w} className="h-[28px] bg-white flex items-center px-[4px]" style={{ width: w }}>
            {t}<span className="ml-auto flex"><Caret /></span>
          </div>
        ))}
        <div className="w-[122px] h-[28px] bg-white flex items-center pl-[4px] whitespace-nowrap overflow-hidden text-[14.5px]">
          <span className="w-[104px] overflow-hidden">1#汽车坡道上的小墙</span><Caret />
        </div>
      </div>

      {/* main */}
      <div className="h-[836px] flex shrink-0">
        {/* left nav */}
        <div className="w-[214px] h-full bg-white flex flex-col border-r border-[#ccc] text-[15px] overflow-hidden">
          <Panel />
          <div className="h-[28px] bg-[#f0f0f0] border-b-2 border-[#ddd] flex items-center -ml-[37px] shrink-0">导航树</div>
          <div className="h-[33px] border-b-2 border-[#ddd] bg-[#f5f5f5] flex items-center justify-end gap-[5px] pr-[2px] shrink-0">
            <span className="w-[30px] h-[28px] bg-[#eaf4fe] border border-[#6cb0f0] rounded-[5px] flex items-center justify-center"><Ic>{icons.listA}</Ic></span>
            <span className="w-[30px] h-[28px] bg-[#eaf4fe] border border-[#6cb0f0] rounded-[5px] flex items-center justify-center"><Ic>{icons.listB}</Ic></span>
          </div>
          <div className="h-[5px] shrink-0" />
          {leftTop.map(([t, , vip]) => (
            <div key={t} className="h-[30px] flex items-center -ml-[18px] shrink-0 whitespace-nowrap">
              {t}
              {vip && <span className="ml-[6px] w-[37px] h-[13px] bg-[#fbdc6a] text-[#c9a227] text-[9px] flex items-center justify-center font-serif">VIP</span>}
            </div>
          ))}
          <div className="h-[60px] shrink-0" />
          {wallItems.map(([ic, t, sel]) => (
            <div key={t} className={`flex items-center pl-[4px] ml-[3px] shrink-0 ${sel ? 'bg-[#bdd4f0] w-[138px] h-[26px] my-[2px]' : 'h-[30px]'}`}>
              <span className="w-[27.500px]"><Ic s={20}>{icons[ic]}</Ic></span>{t}
            </div>
          ))}
          <div className="h-[30px] flex items-center -ml-[18px] shrink-0">门窗洞</div>
          <div className="h-[60px] shrink-0" />
          {lowerNav.map(([t, vip]) => (
            <div key={t} className="h-[30px] flex items-center -ml-[18px] shrink-0 whitespace-nowrap">
              {t}
              {vip && <span className="ml-[6px] w-[37px] h-[13px] bg-[#fbdc6a] text-[#c9a227] text-[9px] flex items-center justify-center font-serif">VIP</span>}
            </div>
          ))}
        </div>

        <div className="w-[6px] bg-[#f6f6f6]" />

        {/* component + property panels */}
        <div className="w-[348px] h-full flex flex-col">
          <div className="h-[395px] flex flex-col bg-white border-x border-b border-[#bbb] text-[15px]">
            <Panel />
            <Tabs a="构件列表" b="图纸管理" />
            <div className="h-[35px] bg-[#f3f3f3] border-b border-[#ccc] flex items-center shrink-0 text-[#444] whitespace-nowrap">
              <span className="w-[31px] pl-[8px]"><Ic s={20}>{icons.newDoc}</Ic></span>
              <span className="w-[50px]">新建<Caret /></span>
              <span className="ml-[4px] w-[22px]"><Ic>{icons.docCopy}</Ic></span>
              <span className="w-[42px] ml-[1px]">复制</span>
              <span className="w-[24px]"><Ic>{icons.docDel}</Ic></span>
              <span className="w-[40px]">删除</span>
              <span className="w-[25px]"><Ic>{icons.layerCopy}</Ic></span>
              <span>层间复制</span>
              <span className="ml-auto pr-[4px] text-[7px]">▶▶</span>
            </div>
            <div className="h-[24px] border-b border-[#ccc] flex items-center justify-between pl-[2px] pr-[6px] shrink-0 text-[#a8a8a8] text-[14.500px]">
              搜索构件...
              <svg width="14" height="14" viewBox="0 0 14 14"><circle cx="6" cy="6" r="4" stroke="#3d8fe0" strokeWidth="1.6" fill="none" /><path d="M9 9l4 4" stroke="#3d8fe0" strokeWidth="2" /></svg>
            </div>
            <div className="relative flex-1 pt-[4px] text-[#444]">
              {compList.map((t) => <div key={t} className="h-[30.100px] flex items-center pl-[54px]">{t}</div>)}
              <div className="h-[30px] flex items-center pl-[50px]">
                <span className="h-[26px] bg-[#bdd4f0] flex items-center px-[4px] w-[192px] whitespace-nowrap">1#汽车坡道上的小墙 [外墙]</span>
              </div>
              <div className="absolute right-[3px] top-[141px] w-[9px] h-[135px] rounded-[4px] bg-[#c8c8c8]" />
            </div>
          </div>

          <div className="h-[8px] bg-[#f6f6f6] shrink-0" />

          <div className="h-[433px] relative flex flex-col bg-white border-x border-[#bbb] text-[15px] overflow-hidden">
            <Panel />
            <Tabs a="属性列表" b="图层管理" />
            <div className="grid grid-cols-[27px_126px_173px] h-[27px] shrink-0 text-[#444] bg-[#f0f0f0] w-[326px] border-b-2 border-[#ccc]">
              <div className="border-r border-[#ccc]" />
              <div className="flex items-center justify-center border-r border-[#ccc]">属性名称</div>
              <div className="flex items-center justify-center">属性值</div>
            </div>
            {props.map(([name, value, link], i) => (
              <div key={name} className="grid grid-cols-[27px_126px_173px] h-[26.200px] shrink-0 w-[326px]">
                <div className="bg-[#f0f0f0] border-r border-b-2 border-[#d8d8d8] flex items-center justify-center text-[#555] text-[14.500px]">{i + 1}</div>
                <div className={`border-r border-b-2 border-[#d8d8d8] flex items-center pl-[4px] whitespace-nowrap overflow-hidden ${link ? 'text-[#3b6fe6]' : 'text-[#333]'}`}>{name}</div>
                <div className="border-b-2 border-[#d8d8d8] flex items-center pl-[4px] whitespace-nowrap overflow-hidden text-[#444]">
                  {value === 'R8' || value === 'R10' ? (
                    <>(2)<span className="ml-[3px] -mt-[5px]"><Rebar /></span>{value.slice(1)}@150</>
                  ) : value}
                </div>
              </div>
            ))}
            <div className="absolute right-[3px] top-[60px] w-[9px] h-[210px] rounded-[4px] bg-[#c8c8c8]" />
            <svg className="absolute left-[0px] top-[0px]" width="348" height="433" viewBox="220 610 348 433">
              <path d="M371 809.500C385 810 400 811 415 816C430 817 445 816 455 812C465 808 472 802 481 800.500" stroke="#f00" strokeWidth="2.500" fill="none" strokeLinecap="round" />
            </svg>
          </div>
        </div>

        {/* splitter */}
        <div className="w-[6px] bg-[#f0f0f0] flex justify-center">
          <div className="w-[4px] h-[126px] mt-[173px] bg-[#5f6b76]" />
        </div>

        {/* viewport + editor */}
        <div className="w-[1297px] h-full flex flex-col">
          <div className="relative h-[471px] bg-black overflow-hidden shrink-0">
            <Scene />
            <ControlDialog />
            <ViewTools />
            <div className="absolute left-[780px] top-[219px] text-[33px] leading-[43px] text-[#ff1a0a] whitespace-nowrap">
              软件默认将下部墙体钢筋伸出<br />来，但下部墙体钢筋是18的，图<br />纸是10的钢筋
            </div>
          </div>
          <div className="h-[6px] bg-white shrink-0 pl-[588px]">
            <div className="w-[124px] h-[5px] bg-[#5f6b78]" />
          </div>

          <div className="h-[359px] flex flex-col bg-[#f0f0f0] border-l border-[#ccc]">
            <Panel />
            <div className="h-[28px] border-b-2 border-[#d4d4d4] flex items-center pl-[11px] text-[15px] text-[#888] shrink-0">编辑钢筋</div>
            <div className="ml-[11px] mt-[10px] w-[1275px] h-[293px] border-2 border-[#d4d4d4] bg-white flex flex-col overflow-hidden">
              <div className="h-[33px] bg-[#f0f0f0] flex items-center shrink-0 text-[15px] text-[#444] whitespace-nowrap border-b border-[#ddd]">
                <div className="w-[100px] flex items-center pl-[6px] gap-[11px] text-[14px] text-[#777]" style={mono}>
                  <span className="text-[#bbb]">|&lt;</span><span className="text-[#bbb]">&lt;</span><span>&gt;</span><span>&gt;|</span>
                </div>
                <span className="w-[29px]"><Ic>{icons.up}</Ic></span>
                <span className="w-[30px]"><Ic>{icons.down}</Ic></span>
                <span className="w-[21px]"><Ic>{icons.insert}</Ic></span>
                <span className="w-[46px]">插入</span>
                <span className="w-[24px]"><Ic>{icons.docDel}</Ic></span>
                <span className="w-[42px]">删除</span>
                <span className="w-[22px]"><Ic>{icons.ruler}</Ic></span>
                <span className="w-[73px]">缩尺配筋</span>
                <span className="w-[23px]"><Ic>{icons.info}</Ic></span>
                <span className="w-[72px]">钢筋信息</span>
                <span className="w-[23px]"><Ic>{icons.lib}</Ic></span>
                <span className="w-[72px]">钢筋图库</span>
                <span className="w-[24px]"><Ic>{icons.other}</Ic></span>
                <span className="w-[50px]">其他<Caret /></span>
                <span>单构件钢筋总重(kg)：115.353</span>
              </div>
              <div className={`${cols} h-[26px] shrink-0 bg-[#f0f0f0] border-b-2 border-[#ccc] text-[14px] text-[#555] whitespace-nowrap`}>
                <div className="border-r border-[#ddd]" />
                {heads.map((h, i) => (
                  <div key={h} className={`flex items-center justify-center border-r border-[#ddd] overflow-hidden ${i === 0 ? 'bg-[#7ab8fb] text-white' : ''}`}>{h}</div>
                ))}
              </div>
              {bars.map((b, i) => (
                <div key={b.v} className={`${cols} h-[57.500px] shrink-0 bg-[#c8fdd4] text-[13px] text-[#222]`} style={mono}>
                  <div className={`flex items-center justify-center text-[14px] ${i === 0 ? 'bg-[#4a9bea] text-white' : 'bg-[#f0f0f0] text-[#a06a3a]'} border-b-2 border-[#ddd]`}>{i + 1}</div>
                  <div className={`flex flex-col justify-center pl-[3px] text-[15px] leading-[22px] ${i === 0 ? 'border-2 border-[#777]' : 'border-b-2 border-r border-[#ddd]'}`} style={CJK}>
                    {b.name.map((l) => <div key={l}>{l}</div>)}
                  </div>
                  <div className="flex items-center pl-[3px] border-r border-b-2 border-[#ddd]">8</div>
                  <div className="flex items-center pl-[6px] border-r border-b-2 border-[#ddd]"><Rebar /></div>
                  <div className="flex items-center pl-[4px] border-r border-b-2 border-[#ddd]">{b.tu}</div>
                  <div className="border-r border-b-2 border-[#ddd]"><Shape b={b} /></div>
                  <div className="flex items-center pl-[3px] border-r border-b-2 border-[#ddd] whitespace-nowrap tracking-[-0.3px]">{b.f}</div>
                  <div className="flex flex-col justify-center pl-[3px] border-r border-b-2 border-[#ddd] text-[14px] leading-[20px]" style={CJK}>
                    {b.d.map((l) => <div key={l}>{l}</div>)}
                  </div>
                  <div className="flex items-center pl-[3px] border-r border-b-2 border-[#ddd]">{b.len}</div>
                  <div className="flex items-center pl-[3px] border-r border-b-2 border-[#ddd]">{b.n}</div>
                  <div className="flex items-center pl-[3px] border-r border-b-2 border-[#ddd]">656</div>
                  <div className="flex items-center pl-[3px] border-r border-b-2 border-[#ddd]">0</div>
                  <div className="flex items-center pl-[3px] border-r border-b-2 border-[#ddd]">{b.w}</div>
                  <div className="flex items-center pl-[3px] border-r border-b-2 border-[#ddd]">{b.t}</div>
                  <div className="flex items-center pl-[5px] border-b-2 border-[#ddd] text-[15px]" style={CJK}>直筋</div>
                </div>
              ))}
              <div className={`${cols} h-[27px] shrink-0 bg-white text-[#a06a3a] text-[14px]`}>
                <div className="bg-[#f0f0f0] flex items-center justify-center border-b-2 border-[#ddd]">4</div>
                {heads.map((h) => <div key={h} className="border-r border-b-2 border-[#ddd]" />)}
              </div>
              <div className="mt-[18px] ml-[18px] w-[907px] h-[10px] rounded-[5px] bg-[#c6c6c6] shrink-0" />
            </div>
          </div>
        </div>
      </div>

      {/* status strip */}
      <div className="h-[7px] bg-[#d9d9d9] flex pl-[811px] gap-[5px] shrink-0 overflow-hidden items-end">
        {[[31, 0], [45, 1], [31, 0], [44, 1], [44, 0], [90, 0], [76, 0]].map(([w, on], i) => (
          <div key={i} className={`h-[3px] border-t border-x ${on ? 'bg-white border-[#4a9bea]' : 'bg-[#e6e6e6] border-[#999]'}`} style={{ width: w }} />
        ))}
      </div>
    </div>
  );
};

export default App;
